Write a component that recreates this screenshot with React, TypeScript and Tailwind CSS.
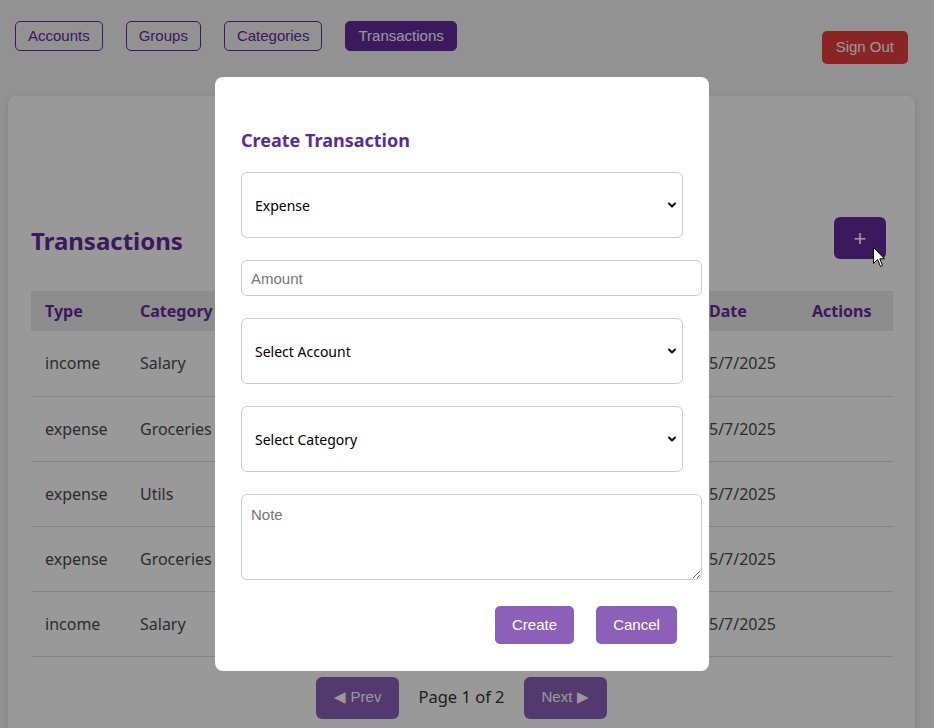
import { ChevronDown } from 'lucide-react';

const segoe = { fontFamily: '"Segoe UI", "Noto Sans", sans-serif' };

const rows = [
  { type: 'income', category: 'Salary', date: '5/7/2025' },
  { type: 'expense', category: 'Groceries', date: '5/7/2025' },
  { type: 'expense', category: 'Utils', date: '5/7/2025' },
  { type: 'expense', category: 'Groceries', date: '5/7/2025' },
  { type: 'income', category: 'Salary', date: '5/7/2025' },
];

const navItems = ['Accounts', 'Groups', 'Categories', 'Transactions'];

const SelectBox = ({ label }: { label: string }) => (
  <div className="relative w-[442px] h-[66px]">
    <select
      className="appearance-none w-full h-full rounded-[6px] border border-[#cccccc] bg-white pl-[13px] text-[14px] text-black outline-none"
      style={segoe}
      defaultValue={label}
    >
      <option>{label}</option>
    </select>
    <ChevronDown className="absolute right-[5px] top-[27px] h-[12px] w-[12px] pointer-events-none" strokeWidth={4} color="#111" />
  </div>
);

const App = () => {
  return (
    <div className="relative h-[728px] overflow-hidden bg-[#f3f3f3]" style={{ fontFamily: '"Liberation Sans", Arial, sans-serif' }}>
      <header className="flex items-start justify-between pl-[15px] pr-[26px] pt-[21px]">
        <nav className="flex gap-[23px]">
          {navItems.map(item =>
            item === 'Transactions' ? (
              <button key={item} className="h-[30px] rounded-[5px] border border-[#622c9b] bg-[#622c9b] px-[12px] text-[15px] text-white">
                {item}
              </button>
            ) : (
              <button key={item} className="h-[30px] rounded-[5px] border border-[#622c9b] bg-transparent px-[12px] text-[15px] text-[#622c9b]">
                {item}
              </button>
            )
          )}
        </nav>
        <button className="mt-[10px] h-[33px] rounded-[5px] bg-[#e53e3e] px-[14px] text-[15px] text-white">Sign Out</button>
      </header>

      <main className="ml-[8px] mt-[32px] w-[907px] rounded-lg bg-white px-[23px] pt-[121px] pb-10 shadow-[0_2px_6px_rgba(0,0,0,0.12)]">
        <div className="flex h-[42px] items-center justify-between">
          <h2 className="pt-[5px] text-[24px] font-bold text-[#622c9b]" style={segoe}>Transactions</h2>
          <button className="mr-[6px] flex h-[42px] w-[52px] items-center justify-center rounded-[6px] bg-[#622c9b] text-[22px] text-white">+</button>
        </div>

        <table className="mt-[32px] w-[862px] table-fixed border-collapse text-[16px]" style={segoe}>
          <colgroup>
            <col className="w-[95px]" />
            <col className="w-[110px]" />
            <col className="w-[130px]" />
            <col className="w-[160px]" />
            <col className="w-[169px]" />
            <col className="w-[103px]" />
            <col className="w-[95px]" />
          </colgroup>
          <thead>
            <tr className="h-[40px] bg-[#ebebeb] text-left font-bold text-[#622c9b]">
              <th className="pl-[14px]">Type</th>
              <th className="pl-[14px]">Category</th>
              <th className="pl-[14px]"></th>
              <th className="pl-[14px]"></th>
              <th className="pl-[14px]"></th>
              <th className="pl-[14px]">Date</th>
              <th className="pl-[14px]">Actions</th>
            </tr>
          </thead>
          <tbody className="text-[#4a4a4a]">
            {rows.map((r, i) => (
              <tr key={i} className="h-[65px] border-b border-[#dddddd]">
                <td className="pl-[14px]">{r.type}</td>
                <td className="pl-[14px]">{r.category}</td>
                <td></td>
                <td></td>
                <td></td>
                <td className="pl-[14px]">{r.date}</td>
                <td></td>
              </tr>
            ))}
          </tbody>
        </table>

        <div className="mt-[20px] flex items-center justify-center gap-[19px]">
          <button className="h-[42px] w-[83px] rounded-[6px] bg-[#8a61b8] text-[15px] text-white">◀ Prev</button>
          <span className="text-[16.5px] text-[#333]" style={segoe}>Page 1 of 2</span>
          <button className="h-[42px] w-[83px] rounded-[6px] bg-[#8a61b8] text-[15px] text-white">Next ▶</button>
        </div>
      </main>

      <div className="fixed inset-0 bg-black/40">
        <div className="absolute left-[215px] top-[77px] h-[594px] w-[494px] rounded-lg bg-white pl-[26px] pt-[52px]">
          <h3 className="mb-[21px] text-[18px] font-bold leading-[22px] text-[#5d2c93]" style={segoe}>Create Transaction</h3>
          <div className="flex flex-col gap-[22px]">
            <SelectBox label="Expense" />
            <input
              placeholder="Amount"
              className="h-[36px] w-[461px] rounded-[6px] border border-[#cccccc] pl-[9px] text-[15px] outline-none placeholder:text-[#777]"
            />
            <SelectBox label="Select Account" />
            <SelectBox label="Select Category" />
            <textarea
              placeholder="Note"
              className="h-[86px] w-[461px] rounded-[6px] border border-[#cccccc] pl-[9px] pt-[9px] text-[15px] outline-none placeholder:text-[#777]"
            />
          </div>
          <div className="mt-[26px] flex w-[436px] justify-end gap-[22px]">
            <button className="h-[38px] w-[79px] rounded-[5px] bg-[#8c60b8] text-[15px] text-white">Create</button>
            <button className="h-[38px] w-[81px] rounded-[5px] bg-[#8c60b8] text-[15px] text-white">Cancel</button>
          </div>
        </div>
        <svg className="absolute left-[873px] top-[247px]" width="13" height="21" viewBox="0 0 13 21">
          <path d="M0.5 0.5 L0.5 16.5 L4.5 12.5 L7.5 19.5 L9.5 18.5 L6.8 11.8 L11.5 11.8 Z" fill="white" stroke="black" strokeWidth="1" />
        </svg>
      </div>
    </div>
  );
};

export default App;
